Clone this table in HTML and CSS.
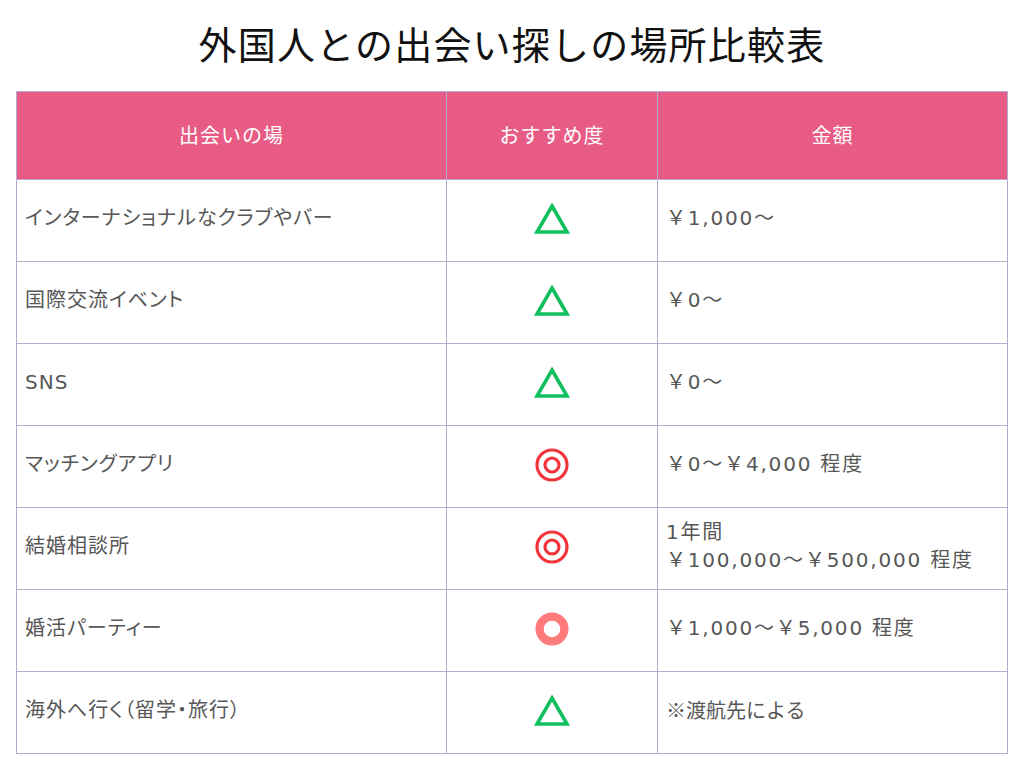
FILE: index.html
```html
<!DOCTYPE html>
<html lang="ja">
<head>
<meta charset="utf-8">
<link rel="stylesheet" href="styles.css">
</head>
<body>
<h1 class="title">外国人との出会い探しの場所比較表</h1>
<table class="cmp">
  <colgroup>
    <col class="c1"><col class="c2"><col class="c3">
  </colgroup>
  <thead>
    <tr><th>出会いの場</th><th>おすすめ度</th><th>金額</th></tr>
  </thead>
  <tbody>
    <tr><td class="place">インターナショナルなクラブやバー</td><td class="mark"><svg class="ico" viewBox="0 0 36 32"><polygon points="18,3 33,29 3,29" fill="none" stroke="#12bf5e" stroke-width="3.6"/></svg></td><td class="price">￥1,000～</td></tr>
    <tr><td class="place">国際交流イベント</td><td class="mark"><svg class="ico" viewBox="0 0 36 32"><polygon points="18,3 33,29 3,29" fill="none" stroke="#12bf5e" stroke-width="3.6"/></svg></td><td class="price">￥0～</td></tr>
    <tr><td class="place">SNS</td><td class="mark"><svg class="ico" viewBox="0 0 36 32"><polygon points="18,3 33,29 3,29" fill="none" stroke="#12bf5e" stroke-width="3.6"/></svg></td><td class="price">￥0～</td></tr>
    <tr><td class="place">マッチングアプリ</td><td class="mark"><svg class="ico" viewBox="0 0 36 36"><circle cx="18" cy="18" r="15" fill="none" stroke="#f2353a" stroke-width="3.2"/><circle cx="18" cy="18" r="7" fill="none" stroke="#f2353a" stroke-width="3.2"/></svg></td><td class="price">￥0～￥4,000 程度</td></tr>
    <tr><td class="place">結婚相談所</td><td class="mark"><svg class="ico" viewBox="0 0 36 36"><circle cx="18" cy="18" r="15" fill="none" stroke="#f2353a" stroke-width="3.2"/><circle cx="18" cy="18" r="7" fill="none" stroke="#f2353a" stroke-width="3.2"/></svg></td><td class="price">1年間<br>￥100,000～￥500,000 程度</td></tr>
    <tr><td class="place">婚活パーティー</td><td class="mark"><svg class="ico" viewBox="0 0 36 36"><circle cx="18" cy="18" r="12.4" fill="none" stroke="#ff7b7b" stroke-width="8.2"/></svg></td><td class="price">￥1,000～￥5,000 程度</td></tr>
    <tr><td class="place">海外へ行く（留学・旅行）</td><td class="mark"><svg class="ico" viewBox="0 0 36 32"><polygon points="18,3 33,29 3,29" fill="none" stroke="#12bf5e" stroke-width="3.6"/></svg></td><td class="price note">※渡航先による</td></tr>
  </tbody>
</table>
</body>
</html>
```
FILE: styles.css
```css
html, body {
  margin: 0;
  padding: 0;
  background: #ffffff;
}
body {
  font-family: "DejaVu Sans", "Noto Sans CJK JP", sans-serif;
  padding: 0 16px;
}
.title {
  margin: 0;
  height: 91px;
  box-sizing: border-box;
  padding-top: 18px;
  text-align: center;
  font-family: "Noto Sans CJK JP", sans-serif;
  font-size: 38px;
  font-weight: 400;
  line-height: 50px;
  color: #111111;
  letter-spacing: 1.2px;
}
.cmp {
  width: 991px;
  border-collapse: collapse;
  table-layout: fixed;
}
.c1 { width: 430px; }
.c2 { width: 211px; }
.c3 { width: 350px; }
.cmp th, .cmp td {
  border: 1px solid #b6aacd;
}
.cmp th {
  height: 84px;
  padding: 0 0 3px;
  background: #e85b85;
  color: #ffffff;
  font-family: "Noto Sans CJK JP", sans-serif;
  font-weight: 400;
  font-size: 20px;
  letter-spacing: 1px;
  text-align: center;
}
.cmp td {
  height: 75px;
  padding: 0 8px 6px;
  color: #575757;
  font-size: 20px;
  line-height: 28px;
  vertical-align: middle;
}
.cmp td.place {
  letter-spacing: 1px;
  font-feature-settings: "palt";
}
.cmp td.price {
  letter-spacing: 1.8px;
}
.cmp td.price.note {
  font-family: "Noto Sans CJK JP", sans-serif;
  letter-spacing: 0;
}
.cmp td.mark {
  text-align: center;
  padding: 0 0 4px;
  height: 77px;
}
.ico {
  display: inline-block;
  width: 36px;
  height: 36px;
  vertical-align: middle;
}
```
